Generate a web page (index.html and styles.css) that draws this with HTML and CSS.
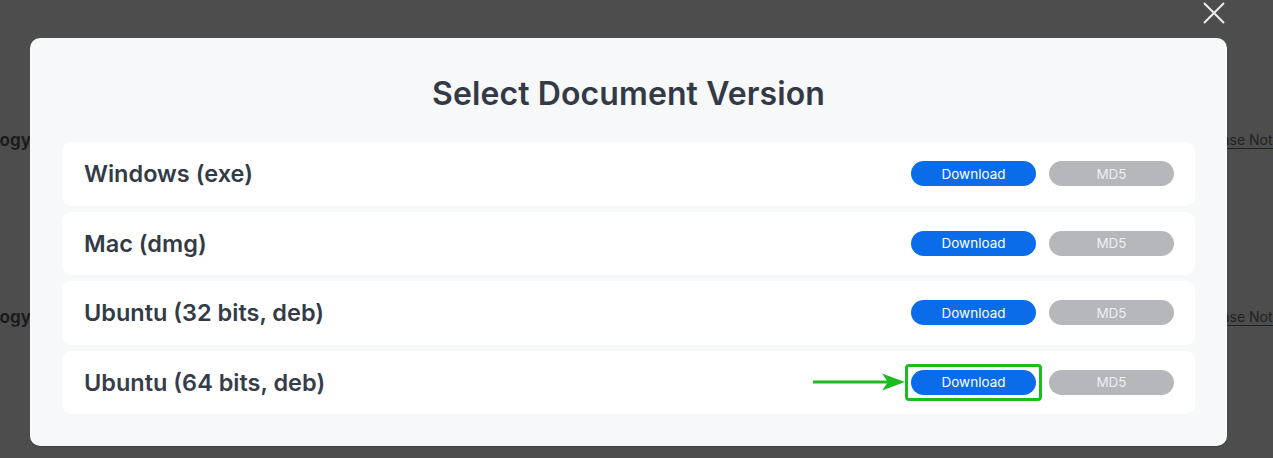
FILE: index.html
```html
<!DOCTYPE html>
<html lang="en">
<head>
<meta charset="utf-8">
<title>Select Document Version</title>
<link rel="stylesheet" href="styles.css">
</head>
<body>
<div class="page">
  <div class="bg-row">
    <div class="bg-left"><span>Technology</span></div>
    <div class="bg-right"><a>Release Notes</a></div>
  </div>
  <div class="bg-row">
    <div class="bg-left"><span>Technology</span></div>
    <div class="bg-right"><a>Release Notes</a></div>
  </div>
</div>

<div class="overlay">
  <button class="close" aria-label="Close">
    <svg width="22" height="22" viewBox="0 0 22 22"><path d="M1 1 L21 21 M21 1 L1 21" stroke="#ececec" stroke-width="2" fill="none"/></svg>
  </button>
  <div class="modal">
    <h1 class="title">Select Document Version</h1>
    <div class="list">
      <div class="item">
        <span class="name">Windows (exe)</span>
        <div class="actions">
          <span class="btn-wrap"><button class="btn btn-dl">Download</button></span>
          <button class="btn btn-md5">MD5</button>
        </div>
      </div>
      <div class="item">
        <span class="name">Mac (dmg)</span>
        <div class="actions">
          <span class="btn-wrap"><button class="btn btn-dl">Download</button></span>
          <button class="btn btn-md5">MD5</button>
        </div>
      </div>
      <div class="item">
        <span class="name">Ubuntu (32 bits, deb)</span>
        <div class="actions">
          <span class="btn-wrap"><button class="btn btn-dl">Download</button></span>
          <button class="btn btn-md5">MD5</button>
        </div>
      </div>
      <div class="item">
        <span class="name name-light">Ubuntu (64 bits, deb)</span>
        <div class="actions">
          <span class="btn-wrap highlight">
            <svg class="arrow" width="94" height="22" viewBox="0 0 94 22"><path d="M2 11 H80" stroke="#1dbb22" stroke-width="3" fill="none"/><path d="M71 2.5 L94 11 L71 19.5 L77 11 Z" fill="#1dbb22"/></svg>
            <button class="btn btn-dl">Download</button>
          </span>
          <button class="btn btn-md5">MD5</button>
        </div>
      </div>
    </div>
  </div>
</div>
</body>
</html>
```
FILE: styles.css
```css
* { box-sizing: border-box; }
html, body { margin: 0; padding: 0; }
body {
  width: 1273px;
  height: 458px;
  overflow: hidden;
  background: #4d4d4d;
  font-family: "Inter", "Noto Sans", sans-serif;
  position: relative;
}

/* dimmed page behind the overlay */
.page {
  display: flex;
  flex-direction: column;
  padding-top: 130px;
  gap: 157px;
}
.bg-row {
  display: flex;
  justify-content: space-between;
  height: 20px;
  line-height: 20px;
}
.bg-left {
  width: 31px;
  display: flex;
  justify-content: flex-end;
  white-space: nowrap;
  font-weight: 700;
  font-size: 17px;
  color: #1c1c1c;
}
.bg-right {
  width: 80px;
  white-space: nowrap;
  font-size: 14px;
  color: #222;
}
.bg-right a { text-decoration: underline; text-underline-offset: 3px; }

/* overlay + modal */
.overlay {
  position: absolute;
  inset: 0;
  padding: 38px 46px 12px 30px;
}
.close {
  position: absolute;
  left: 1203px;
  top: 2px;
  width: 22px;
  height: 22px;
  padding: 0;
  border: 0;
  background: none;
  display: flex;
}
.modal {
  height: 408px;
  background: #f7f8fa;
  border-radius: 10px;
  padding: 0 32px 33px;
  box-shadow: 0 1px 0 #3c3c3c;
}
.title {
  margin: 0;
  padding-top: 36px;
  height: 104px;
  line-height: 39px;
  text-align: center;
  font-size: 32px;
  font-weight: 600;
  color: #333a46;
  letter-spacing: 0.1px;
}
.list {
  display: flex;
  flex-direction: column;
  gap: 6px;
}
.item {
  height: 63.5px;
  background: #ffffff;
  border-radius: 9px;
  display: flex;
  align-items: center;
  justify-content: space-between;
  padding: 0 21px 0 22px;
}
.name {
  font-size: 23.5px;
  font-weight: 600;
  color: #333b47;
}
.name-light { color: #363d49; }
.actions {
  display: flex;
  align-items: center;
  gap: 13px;
}
.btn-wrap {
  position: relative;
  display: flex;
}
.btn {
  width: 125px;
  height: 25px;
  border: 0;
  border-radius: 13px;
  font-family: "Inter", "Noto Sans", sans-serif;
  font-size: 13.5px;
  padding: 0;
}
.btn-dl { background: #0a6ce8; color: #ffffff; }
.btn-md5 { background: #b6b7ba; color: #eeeef0; }

/* screenshot annotation */
.highlight::after {
  content: "";
  position: absolute;
  inset: -6px;
  border: 3px solid #1dbb22;
  border-radius: 4px;
}
.arrow {
  position: absolute;
  right: calc(100% + 6px);
  top: 1px;
}
```
